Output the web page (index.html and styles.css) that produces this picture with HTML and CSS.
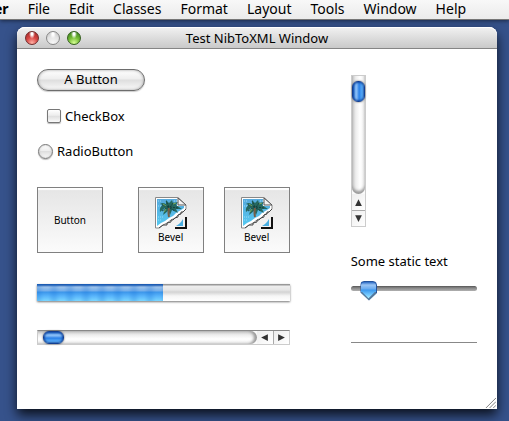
FILE: index.html
```html
<!DOCTYPE html>
<html lang="en">
<head>
<meta charset="utf-8">
<title>Test NibToXML Window</title>
<link rel="stylesheet" href="styles.css">
</head>
<body>
<nav class="menubar">
  <button class="menu menu-app">er</button>
  <button class="menu">File</button>
  <button class="menu">Edit</button>
  <button class="menu">Classes</button>
  <button class="menu">Format</button>
  <button class="menu">Layout</button>
  <button class="menu">Tools</button>
  <button class="menu">Window</button>
  <button class="menu">Help</button>
</nav>

<svg class="defs" width="0" height="0" aria-hidden="true">
  <defs>
    <linearGradient id="sky" x1="0" y1="0" x2="0" y2="1">
      <stop offset="0" stop-color="#56a9dc"/>
      <stop offset="1" stop-color="#55c8f0"/>
    </linearGradient>
    <symbol id="picture" viewBox="0 0 32 32">
      <path d="M0.500 0.500H23L31 8V12L28 15L23 18L20 21L16 23L12 26L8 28L4 31H0.500Z" fill="#fff" stroke="#888"/>
      <path d="M2 2H22V9H29V11L26 13L21 16L18 19L14 21L10 24L6 26L2 29Z" fill="url(#sky)"/>
      <path d="M3 4h4M3 9h3M3 20h6M3 23h4M19 4h3" stroke="#9bdcf5" stroke-dasharray="1 1"/>
      <path d="M14 10Q9 4 5 7L8 8Q4 10 5 15L10 11L8 18L13 14L15 18L17 13L23 16L21 12L27 12L21 8L23 5L18 6L17 3L14 6L11 3L11 7Z" fill="#25685f"/>
      <path d="M14 10L7 8M14 10L7 14M14 10L11 4M15 10L19 5M15 10L23 11M15 11L20 14" stroke="#173e3d" stroke-dasharray="2 1" fill="none"/>
      <path d="M8 7l3 2M18 7l3-1M11 12l-2 3" stroke="#77a75b"/>
      <path d="M14 11Q13 16 14 20" stroke="#765d47" stroke-width="2" fill="none"/>
      <path d="M23 1V8H31Z" fill="#f3f3f3" stroke="#555"/>
      <path d="M31 12L28 15H26V17L23 18V20L20 21L18 23H16V25L12 26V28H8L4 31" fill="none" stroke="#444"/>
      <path d="M31 20V31H20" fill="none" stroke="#111" stroke-width="2"/>
      <path d="M28 22V29H21L24 27L26 25Z" fill="#49aee1"/>
    </symbol>
  </defs>
</svg>

<main class="window">
  <header class="titlebar">
    <div class="lights">
      <button class="light light-close" aria-label="Close"></button>
      <button class="light light-minimize" aria-label="Minimize"></button>
      <button class="light light-zoom" aria-label="Zoom"></button>
    </div>
    <h1 class="title">Test NibToXML Window</h1>
  </header>
  <div class="content">
    <section class="column">
      <button class="push">A Button</button>
      <label class="option option-check"><input class="check" type="checkbox">CheckBox</label>
      <label class="option option-radio"><input class="radio" type="radio">RadioButton</label>
      <div class="bevels">
        <button class="bevel">Button</button>
        <div class="bevel-pair">
          <button class="bevel"><svg class="picture" aria-hidden="true"><use href="#picture"/></svg>Bevel</button>
          <button class="bevel"><svg class="picture" aria-hidden="true"><use href="#picture"/></svg>Bevel</button>
        </div>
      </div>
      <progress class="progress" value="50" max="100" aria-label="Progress"></progress>
      <div class="scroll scroll-h">
        <div class="track track-h"><div class="thumb thumb-h"></div></div>
        <button class="arrow arrow-h" aria-label="Scroll left"><svg class="glyph" viewBox="0 0 8 8"><path d="M7 1V7L1 4Z"/></svg></button>
        <button class="arrow arrow-h" aria-label="Scroll right"><svg class="glyph" viewBox="0 0 8 8"><path d="M1 1V7L7 4Z"/></svg></button>
      </div>
    </section>
    <section class="column column-side">
      <div class="scroll scroll-v">
        <div class="track track-v"><div class="thumb thumb-v"></div></div>
        <button class="arrow arrow-v" aria-label="Scroll up"><svg class="glyph" viewBox="0 0 8 8"><path d="M1 7H7L4 1Z"/></svg></button>
        <button class="arrow arrow-v" aria-label="Scroll down"><svg class="glyph" viewBox="0 0 8 8"><path d="M1 1H7L4 7Z"/></svg></button>
      </div>
      <label class="caption" for="amount">Some static text</label>
      <input class="slider" id="amount" type="range" min="0" max="100" value="9">
      <hr class="rule">
    </section>
  </div>
  <svg class="grip" viewBox="0 0 12 12" aria-hidden="true"><path d="M1 12L12 1M5 12L12 5M9 12L12 9"/></svg>
</main>
</body>
</html>
```
FILE: styles.css
```css
* {
  box-sizing: border-box;
}

body {
  margin: 0;
  min-height: 100vh;
  display: flex;
  flex-direction: column;
  overflow: hidden;
  background: #36528b;
  color: #000;
  font: 13px/18px "Noto Sans", "Open Sans", sans-serif;
}

button,
input {
  margin: 0;
  padding: 0;
  border: 0;
  color: inherit;
  font: inherit;
}

.defs {
  position: absolute;
}

.menubar {
  display: flex;
  gap: 19px;
  height: 20px;
  padding-bottom: 2px;
  overflow: hidden;
  background: linear-gradient(#f8f8f8, #ebebeb);
  border-bottom: 1px solid #777;
  box-shadow: 0 1px 4px rgba(0, 0, 0, 0.5);
  font-size: 14px;
}

.menu {
  flex: none;
  background: none;
}

.menu-app {
  margin-left: -6px;
  font-weight: bold;
}

.window {
  position: relative;
  flex: 1;
  display: flex;
  flex-direction: column;
  margin: 7px 12px 12px 17px;
  background: #fff;
  border-radius: 8px 8px 0 0;
  box-shadow: 0 6px 12px rgba(0, 0, 0, 0.8);
}

.titlebar {
  display: grid;
  grid-template-columns: 1fr auto 1fr;
  align-items: center;
  height: 22px;
  padding: 0 8px;
  background: linear-gradient(#f2f2f2, #c9c9c9);
  border-bottom: 1px solid #858585;
  border-radius: 8px 8px 0 0;
  box-shadow: inset 0 1px #fff;
}

.lights {
  display: flex;
  gap: 7px;
}

.light {
  width: 14px;
  height: 14px;
  border: 1px solid #888;
  border-radius: 50%;
}

.light-close {
  border-color: #702c2c;
  background: radial-gradient(ellipse at 50% 15%, #fff 0 10%, transparent 35%), radial-gradient(circle at 50% 90%, #ffb0a4, #d84744 45%, #982322);
}

.light-minimize {
  background: radial-gradient(ellipse at 50% 15%, #fff 0 10%, transparent 35%), radial-gradient(circle at 50% 90%, #f7f7f7, #e2e2e2 55%, #bbb);
}

.light-zoom {
  border-color: #35601d;
  background: radial-gradient(ellipse at 50% 15%, #fff 0 10%, transparent 35%), radial-gradient(circle at 50% 90%, #d7ff96, #76bd35 45%, #2f731b);
}

.title {
  margin: 0;
  font-size: 13px;
  font-weight: normal;
}

.content {
  display: grid;
  grid-template-columns: minmax(0, 2fr) minmax(0, 1fr);
  gap: 61px;
  padding: 20px;
}

.column {
  display: flex;
  flex-direction: column;
  align-items: flex-start;
}

.column-side {
  align-items: stretch;
  padding-top: 6px;
}

.push {
  width: 108px;
  height: 22px;
  padding-bottom: 2px;
  border: 1px solid #6d6d6d;
  border-radius: 11px;
  background: linear-gradient(#fff, #eee 45%, #dedede 50%, #fafafa);
  box-shadow: inset 0 0 3px #999, 0 1px 1px #ccc;
  line-height: 18px;
}

.option {
  display: flex;
  align-items: center;
  gap: 4px;
}

.option-check {
  margin: 16px 0 0 10px;
}

.option-radio {
  margin-top: 17px;
  padding-left: 1px;
}

.check,
.radio {
  appearance: none;
  width: 15px;
  height: 15px;
  border: 1px solid #777;
  background: linear-gradient(#fff, #ededed 45%, #dedede 50%, #fafafa);
  box-shadow: 0 1px 1px #bbb;
}

.check {
  width: 14px;
  height: 14px;
  border-radius: 2px;
}

.radio {
  border-radius: 50%;
  box-shadow: inset 0 0 2px #bbb, 0 1px 1px #bbb;
}

.bevels {
  align-self: stretch;
  display: flex;
  justify-content: space-between;
  margin-top: 27px;
}

.bevel-pair {
  display: flex;
  gap: 20px;
}

.bevel {
  display: flex;
  flex-direction: column;
  align-items: center;
  justify-content: center;
  gap: 2px;
  width: 66px;
  height: 66px;
  border: 1px solid #808080;
  background: linear-gradient(#e5e5e5, #fbfbfb);
  box-shadow: inset 0 2px 1px #fff;
  font-size: 10px;
  line-height: 12px;
}

.picture {
  width: 32px;
  height: 32px;
}

.progress {
  appearance: none;
  width: 100%;
  height: 17px;
  margin-top: 31px;
  border: 0;
  box-shadow: 0 1px 2px #777;
}

.progress::-webkit-progress-bar {
  background: linear-gradient(#999 0 1px, #eee 2px, #e6e6e6 6px, #d3d3d3 8px, #f6f6f6 12px, #fff);
}

.progress::-webkit-progress-value {
  background:
    repeating-linear-gradient(90deg, rgba(15, 105, 210, 0.2) 0 2px, transparent 7px 11px, rgba(15, 105, 210, 0.2) 16px),
    linear-gradient(#1e5bb0 0 1px, #9dc3eb 3px, #74aeea 7px, #3c96ea 8px, #58b4fb 12px, #7cd7ff);
}

.scroll {
  display: flex;
  background: #fafafa;
}

.scroll-h {
  align-self: stretch;
  height: 15px;
  margin-top: 29px;
  border: 1px solid #ccc;
  border-top-color: #888;
}

.scroll-v {
  flex-direction: column;
  width: 15px;
  height: 152px;
  border: 1px solid #ccc;
}

.track {
  flex: 1;
}

.track-h {
  padding-left: 5px;
  border-radius: 0 7px 7px 0;
  background: linear-gradient(#ccc, #eee 4px, #fff 8px, #eee);
  box-shadow: inset -3px 0 3px #999;
}

.track-v {
  padding-top: 5px;
  border-radius: 0 0 7px 7px;
  background: linear-gradient(90deg, #ccc, #eee 4px, #fff 8px, #eee);
  box-shadow: inset 0 -3px 3px #999;
}

.thumb {
  border: 1px solid #143f91;
  border-radius: 6px;
  box-shadow: inset 0 0 2px 1px #164ea7, 0 0 2px #555;
}

.thumb-h {
  width: 21px;
  height: 13px;
  background: linear-gradient(#226cce, #92c5fa 3px, #5ca0ef 5px, #287fe8 6px, #68bcff 10px, #a5ebff);
}

.thumb-v {
  width: 13px;
  height: 21px;
  background: linear-gradient(90deg, #226cce, #92c5fa 3px, #5ca0ef 5px, #287fe8 6px, #68bcff 10px, #a5ebff);
}

.arrow {
  display: grid;
  place-items: center;
  flex: none;
  background: linear-gradient(135deg, #eee, #fff);
}

.arrow-h {
  width: 16px;
}

.arrow-v {
  height: 16px;
}

.arrow-h + .arrow-h {
  border-left: 1px solid #aaa;
}

.arrow-v + .arrow-v {
  border-top: 1px solid #aaa;
}

.glyph {
  width: 9px;
  height: 9px;
  fill: #333;
}

.caption {
  margin-top: 25px;
}

.slider {
  appearance: none;
  width: 100%;
  height: 20px;
  margin-top: 8px;
  background: none;
}

.slider::-webkit-slider-runnable-track {
  height: 5px;
  border-radius: 3px;
  background: linear-gradient(#555, #888 2px, #b0b0b0);
}

.slider::-webkit-slider-thumb {
  appearance: none;
  width: 17px;
  height: 20px;
  margin-top: -5px;
  border: 1px solid #23529c;
  border-radius: 4px 4px 0 0;
  background:
    linear-gradient(45deg, #55789b 0 6px, transparent 7px) left bottom / 8px 8px no-repeat,
    linear-gradient(-45deg, #55789b 0 6px, transparent 7px) right bottom / 8px 8px no-repeat,
    linear-gradient(#2868c4, #9bc5f4 3px, #68aaf0 7px, #3b98ee 8px, #76cbff 13px, #c1ffff);
  clip-path: polygon(0 0, 100% 0, 100% 60%, 50% 100%, 0 60%);
}

.rule {
  width: 100%;
  height: 1px;
  margin: 44px 0 0;
  border: 0;
  background: #888;
}

.grip {
  position: absolute;
  right: 1px;
  bottom: 1px;
  width: 11px;
  height: 11px;
  fill: none;
  stroke: #777;
}
```
